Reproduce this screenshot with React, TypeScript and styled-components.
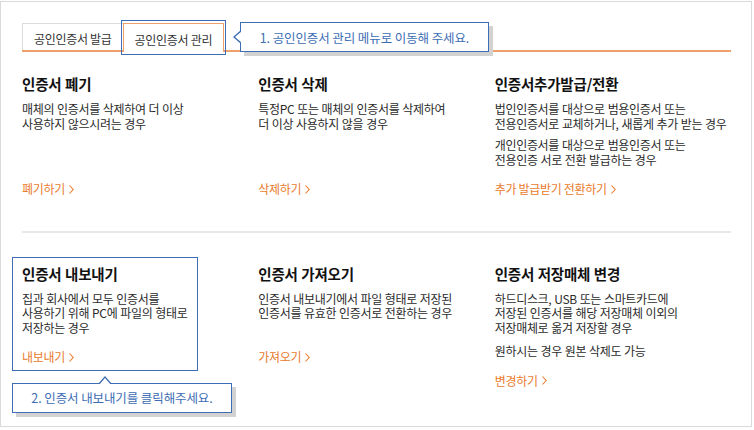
import React from "react";
import styled, { createGlobalStyle } from "styled-components";

const GlobalStyle = createGlobalStyle`
  html, body { margin: 0; padding: 0; background: #ffffff; }
  body { font-family: "Noto Sans CJK KR", "Noto Sans", sans-serif; }
  * { box-sizing: border-box; }
`;

const BLUE = "#3d6db4";
const ORANGE_LINE = "#eea06a";
const ORANGE_TEXT = "#e97a2c";

const Frame = styled.div`
  margin-top: 1px;
  width: 752px;
  height: 426px;
  border: 1px solid #d9d9d9;
  padding: 21px 20px 0 21px;
  background: #fff;
`;

const TabBar = styled.div`
  position: relative;
  display: flex;
  align-items: flex-end;
  border-bottom: 2px solid ${ORANGE_LINE};
  height: 29px;
`;

const Tab = styled.div<{ $active?: boolean }>`
  position: relative;
  height: ${(p) => (p.$active ? "29px" : "27px")};
  margin-bottom: ${(p) => (p.$active ? "-2px" : "0")};
  padding: 3px 11px 0;
  display: flex;
  align-items: center;
  border: 1px solid ${(p) => (p.$active ? ORANGE_LINE : "#dcdcdc")};
  border-right: ${(p) => (p.$active ? `1px solid ${ORANGE_LINE}` : "none")};
  border-bottom: none;
  background: #fff;
  font-size: 12px;
  letter-spacing: -0.3px;
  color: #333;
  white-space: nowrap;
`;

const Highlight = styled.div`
  position: absolute;
  border: 1px solid ${BLUE};
  pointer-events: none;
`;

const TabHighlight = styled(Highlight)`
  top: -4px;
  left: -3px;
  right: -3px;
  bottom: -3px;
`;

const CardHighlight = styled(Highlight)`
  top: -7px;
  left: -10px;
  width: 186px;
  bottom: -6px;
`;

const Callout = styled.div<{ $pointer: "left" | "up" }>`
  position: absolute;
  height: 30px;
  border: 1px solid ${BLUE};
  background: #fff;
  box-shadow: 4px 4px 0 #d2d2d2;
  color: ${BLUE};
  font-size: 12.5px;
  letter-spacing: -0.1px;
  display: flex;
  align-items: center;
  justify-content: center;
  white-space: nowrap;
  z-index: 2;

  &::before,
  &::after {
    content: "";
    position: absolute;
    width: 0;
    height: 0;
    border-style: solid;
  }

  ${(p) =>
    p.$pointer === "left"
      ? `
    &::before {
      left: -8px;
      top: 7px;
      border-width: 7px 8px 7px 0;
      border-color: transparent ${BLUE} transparent transparent;
    }
    &::after {
      left: -6px;
      top: 8px;
      border-width: 6px 7px 6px 0;
      border-color: transparent #fff transparent transparent;
    }
  `
      : `
    &::before {
      top: -8px;
      left: 85px;
      border-width: 0 7px 8px 7px;
      border-color: transparent transparent ${BLUE} transparent;
    }
    &::after {
      top: -6px;
      left: 86px;
      border-width: 0 6px 7px 6px;
      border-color: transparent transparent #fff transparent;
    }
  `}
`;

const TabCallout = styled(Callout)`
  left: 218px;
  top: -1px;
  width: 249px;
`;

const CardCallout = styled(Callout)`
  left: -10px;
  top: 119px;
  width: 220px;
`;

const Row = styled.div<{ $stretch?: boolean }>`
  display: grid;
  grid-template-columns: repeat(3, 1fr);
  align-items: ${(p) => (p.$stretch ? "stretch" : "start")};
  margin-top: ${(p) => (p.$stretch ? "22px" : "0")};
`;

const Card = styled.div`
  position: relative;
  display: flex;
  flex-direction: column;
`;

const Title = styled.h3`
  margin: 0 0 8px;
  font-size: 14.5px;
  line-height: 20px;
  font-weight: 700;
  letter-spacing: -0.2px;
  word-spacing: 0.5px;
  color: #111;
  white-space: nowrap;
`;

const Desc = styled.div`
  flex: 1;
  min-height: 43.5px;
`;

const Para = styled.p<{ $gap?: number }>`
  margin: ${(p) => (p.$gap ? `${p.$gap}px` : "0")} 0 0;
  font-size: 12px;
  line-height: 14.5px;
  letter-spacing: -0.3px;
  word-spacing: 0.4px;
  color: #2b2b2b;
  white-space: nowrap;
`;

const LinkText = styled.a`
  margin-top: 15px;
  display: flex;
  align-items: center;
  gap: 4px;
  font-size: 12px;
  line-height: 14.5px;
  letter-spacing: -0.3px;
  color: ${ORANGE_TEXT};
  text-decoration: none;
  cursor: pointer;
  white-space: nowrap;
`;

const Divider = styled.div`
  height: 2px;
  background: #e8e8e8;
  margin: 34px 0 31px;
`;

const Chevron = () => (
  <svg width="5" height="9" viewBox="0 0 5 9" aria-hidden="true">
    <polyline points="0.5,0.5 4.2,4.5 0.5,8.5" fill="none" stroke={ORANGE_TEXT} strokeWidth="1.1" />
  </svg>
);

type CardData = {
  title: string;
  paras: string[][];
  link: string;
};

const row1: CardData[] = [
  {
    title: "인증서 폐기",
    paras: [["매체의 인증서를 삭제하여 더 이상", "사용하지 않으시려는 경우"]],
    link: "폐기하기",
  },
  {
    title: "인증서 삭제",
    paras: [["특정PC 또는 매체의 인증서를 삭제하여", "더 이상 사용하지 않을 경우"]],
    link: "삭제하기",
  },
  {
    title: "인증서추가발급/전환",
    paras: [
      ["법인인증서를 대상으로 범용인증서 또는", "전용인증서로 교체하거나, 새롭게 추가 받는 경우"],
      ["개인인증서를 대상으로 범용인증서 또는", "전용인증 서로 전환 발급하는 경우"],
    ],
    link: "추가 발급받기 전환하기",
  },
];

const row2: CardData[] = [
  {
    title: "인증서 내보내기",
    paras: [["집과 회사에서 모두 인증서를", "사용하기 위해 PC에 파일의 형태로", "저장하는 경우"]],
    link: "내보내기",
  },
  {
    title: "인증서 가져오기",
    paras: [["인증서 내보내기에서 파일 형태로 저장된", "인증서를 유효한 인증서로 전환하는 경우"]],
    link: "가져오기",
  },
  {
    title: "인증서 저장매체 변경",
    paras: [
      ["하드디스크, USB 또는 스마트카드에", "저장된 인증서를 해당 저장매체 이외의", "저장매체로 옮겨 저장할 경우"],
      ["원하시는 경우 원본 삭제도 가능"],
    ],
    link: "변경하기",
  },
];

const CardBody: React.FC<{ data: CardData; gap: number }> = ({ data, gap }) => (
  <>
    <Title>{data.title}</Title>
    <Desc>
      {data.paras.map((lines, i) => (
        <Para key={i} $gap={i > 0 ? gap : 0}>
          {lines.map((l, j) => (
            <React.Fragment key={j}>
              {l}
              {j < lines.length - 1 && <br />}
            </React.Fragment>
          ))}
        </Para>
      ))}
    </Desc>
    <LinkText>
      {data.link}
      <Chevron />
    </LinkText>
  </>
);

export default function App() {
  return (
    <>
      <GlobalStyle />
      <Frame>
        <TabBar>
          <Tab>공인인증서 발급</Tab>
          <Tab $active>
            공인인증서 관리
            <TabHighlight />
          </Tab>
          <TabCallout $pointer="left">1. 공인인증서 관리 메뉴로 이동해 주세요.</TabCallout>
        </TabBar>

        <Row $stretch>
          {row1.map((c) => (
            <Card key={c.title}>
              <CardBody data={c} gap={7} />
            </Card>
          ))}
        </Row>

        <Divider />

        <Row>
          {row2.map((c, i) => (
            <Card key={c.title}>
              <CardBody data={c} gap={9} />
              {i === 0 && (
                <>
                  <CardHighlight />
                  <CardCallout $pointer="up">2. 인증서 내보내기를 클릭해주세요.</CardCallout>
                </>
              )}
            </Card>
          ))}
        </Row>
      </Frame>
    </>
  );
}
